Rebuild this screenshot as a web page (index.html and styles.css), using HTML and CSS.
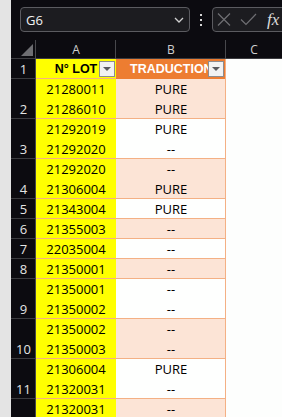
FILE: index.html
```html
<!DOCTYPE html>
<html lang="fr">

<head>
    <meta charset="UTF-8">
    <title>Lots</title>
    <link rel="stylesheet" href="styles.css">
</head>

<body>

    <div class="app">
        <div class="edge"></div>

        <div class="main">
            <!-- barre de formule -->
            <div class="toolbar">
                <div class="namebox">
                    <span>G6</span>
                    <svg width="10" height="6" viewBox="0 0 10 6">
                        <path d="M1 1 L5 5 L9 1" fill="none" stroke="#d0d0d0" stroke-width="1.3" />
                    </svg>
                </div>
                <div class="dots"><i></i><i></i><i></i></div>
                <div class="formula">
                    <svg width="14" height="13" viewBox="0 0 14 13">
                        <path d="M1 0.5 L13 12.5 M13 0.5 L1 12.5" stroke="#6f6f73" stroke-width="1.2" />
                    </svg>
                    <svg class="check" width="17" height="13" viewBox="0 0 17 13">
                        <path d="M1 6.5 L6 11.5 L16 1" fill="none" stroke="#6f6f73" stroke-width="1.2" />
                    </svg>
                    <span class="fx">fx</span>
                </div>
            </div>

            <!-- feuille -->
            <div class="sheet">
                <div class="row colhead">
                    <div class="corner"><span class="tri"></span></div>
                    <div class="col">A</div>
                    <div class="col">B</div>
                    <div class="col last">C</div>
                </div>

                <div class="row">
                    <div class="num">1</div>
                    <div class="a hd">N° LOT<span class="dd"></span></div>
                    <div class="b hd">TRADUCTION<span class="dd"></span></div>
                    <div class="c"></div>
                </div>

                <div class="row tall">
                    <div class="num">2</div>
                    <div class="a"><p>21280011</p><p>21286010</p></div>
                    <div class="b band"><p>PURE</p><p>PURE</p></div>
                    <div class="c"></div>
                </div>

                <div class="row tall">
                    <div class="num">3</div>
                    <div class="a"><p>21292019</p><p>21292020</p></div>
                    <div class="b"><p>PURE</p><p>--</p></div>
                    <div class="c"></div>
                </div>

                <div class="row tall">
                    <div class="num">4</div>
                    <div class="a"><p>21292020</p><p>21306004</p></div>
                    <div class="b band"><p>--</p><p>PURE</p></div>
                    <div class="c"></div>
                </div>

                <div class="row">
                    <div class="num">5</div>
                    <div class="a"><p>21343004</p></div>
                    <div class="b"><p>PURE</p></div>
                    <div class="c"></div>
                </div>

                <div class="row">
                    <div class="num">6</div>
                    <div class="a"><p>21355003</p></div>
                    <div class="b band"><p>--</p></div>
                    <div class="c"></div>
                </div>

                <div class="row">
                    <div class="num">7</div>
                    <div class="a"><p>22035004</p></div>
                    <div class="b"><p>--</p></div>
                    <div class="c"></div>
                </div>

                <div class="row">
                    <div class="num">8</div>
                    <div class="a"><p>21350001</p></div>
                    <div class="b band"><p>--</p></div>
                    <div class="c"></div>
                </div>

                <div class="row tall">
                    <div class="num">9</div>
                    <div class="a"><p>21350001</p><p>21350002</p></div>
                    <div class="b"><p>--</p><p>--</p></div>
                    <div class="c"></div>
                </div>

                <div class="row tall">
                    <div class="num">10</div>
                    <div class="a"><p>21350002</p><p>21350003</p></div>
                    <div class="b band"><p>--</p><p>--</p></div>
                    <div class="c"></div>
                </div>

                <div class="row tall">
                    <div class="num">11</div>
                    <div class="a"><p>21306004</p><p>21320031</p></div>
                    <div class="b"><p>PURE</p><p>--</p></div>
                    <div class="c"></div>
                </div>

                <div class="row tall">
                    <div class="num"></div>
                    <div class="a"><p>21320031</p></div>
                    <div class="b band"><p>--</p></div>
                    <div class="c"></div>
                </div>
            </div>
        </div>
    </div>

</body></html>
```

FILE: styles.css
```css
body {
    margin: 0;
    font-family: "Open Sans", "Noto Sans", sans-serif;
    background-color: #e4e4e4;
}

p {
    margin: 0;
}

.app {
    display: flex;
    height: 417px;
    overflow: hidden;
}

.edge {
    flex: none;
    width: 11px;
    background-color: #e4e4e4;
}

.main {
    flex: 1;
    min-width: 0;
    overflow: hidden;
    background-color: #0c0b10;
}

/* barre de formule */

.toolbar {
    display: flex;
    align-items: flex-start;
    height: 40px;
    padding-top: 7px;
    box-sizing: border-box;
}

.namebox {
    flex: none;
    display: flex;
    align-items: center;
    justify-content: space-between;
    width: 170px;
    height: 25px;
    margin-left: 9px;
    padding: 0 5px;
    box-sizing: border-box;
    border: 1px solid #5b5b60;
    border-radius: 4px;
    background-color: #1c1c20;
    color: #f2f2f2;
    font-size: 13px;
}

.dots {
    flex: none;
    display: flex;
    flex-direction: column;
    gap: 3px;
    margin: 7px 0 0 10px;
}

.dots i {
    display: block;
    width: 2px;
    height: 2px;
    background-color: #d4d4d4;
}

.formula {
    flex: none;
    display: flex;
    align-items: center;
    width: 90px;
    height: 25px;
    margin-left: 10px;
    padding-left: 4px;
    box-sizing: border-box;
    border: 1px solid #5b5b60;
    border-radius: 4px;
    background-color: #1c1c20;
}

.check {
    margin-left: 9px;
}

.fx {
    margin-left: 10px;
    color: #dcdcdc;
    font-family: "Liberation Serif", serif;
    font-style: italic;
    font-size: 17px;
    line-height: 1;
}

/* feuille */

.row {
    display: grid;
    grid-template-columns: 25px 80px 110px 1fr;
    height: 20px;
    line-height: 20px;
    font-size: 13px;
    text-align: center;
}

.row.tall {
    height: 40px;
}

.colhead {
    height: 19px;
    line-height: 19px;
    font-size: 12px;
    color: #cfcfcf;
}

.colhead > div {
    box-shadow: inset -1px 0 #48484c, inset 0 -1px #3c3c40;
}

.colhead .last {
    box-shadow: inset 0 -1px #3c3c40;
}

.corner {
    display: flex;
    justify-content: flex-end;
    align-items: flex-end;
    padding: 0 3px 3px 0;
}

.tri {
    width: 12px;
    height: 12px;
    background-color: #6e6e72;
    clip-path: polygon(100% 0, 100% 100%, 0 100%);
}

.num {
    display: flex;
    align-items: flex-end;
    justify-content: center;
    color: #e4e4e4;
    font-size: 13px;
    box-shadow: inset -1px 0 #48484c, inset 0 -1px #3a3a3e;
}

.a {
    background-color: #ffff00;
    color: #000;
    box-shadow: inset 0 -1px #f4b084;
}

.b {
    background-color: #fefffe;
    color: #000;
    box-shadow: inset -1px 0 #f4b084, inset 0 -1px #f4b084;
}

.b.band {
    background-color: #fce4d6;
}

.c {
    background-color: #fdfefd;
}

.hd {
    position: relative;
    overflow: hidden;
    white-space: nowrap;
    font-family: "Liberation Sans", Arial, sans-serif;
    font-weight: bold;
    font-size: 12.5px;
}

.b.hd {
    padding-left: 14px;
    text-align: left;
    background-color: #ed7d31;
    color: #fff;
    box-shadow: inset -1px 0 #f4b084;
}

.dd {
    position: absolute;
    top: 2px;
    right: 1px;
    width: 16px;
    height: 16px;
    box-sizing: border-box;
    border: 1px solid #8c8c90;
    background-color: #f2f2f2;
}

.b .dd {
    right: 2px;
}

.dd::after {
    content: "";
    position: absolute;
    top: 5px;
    left: 3px;
    border-left: 4px solid transparent;
    border-right: 4px solid transparent;
    border-top: 4px solid #5a5a5e;
}
```
